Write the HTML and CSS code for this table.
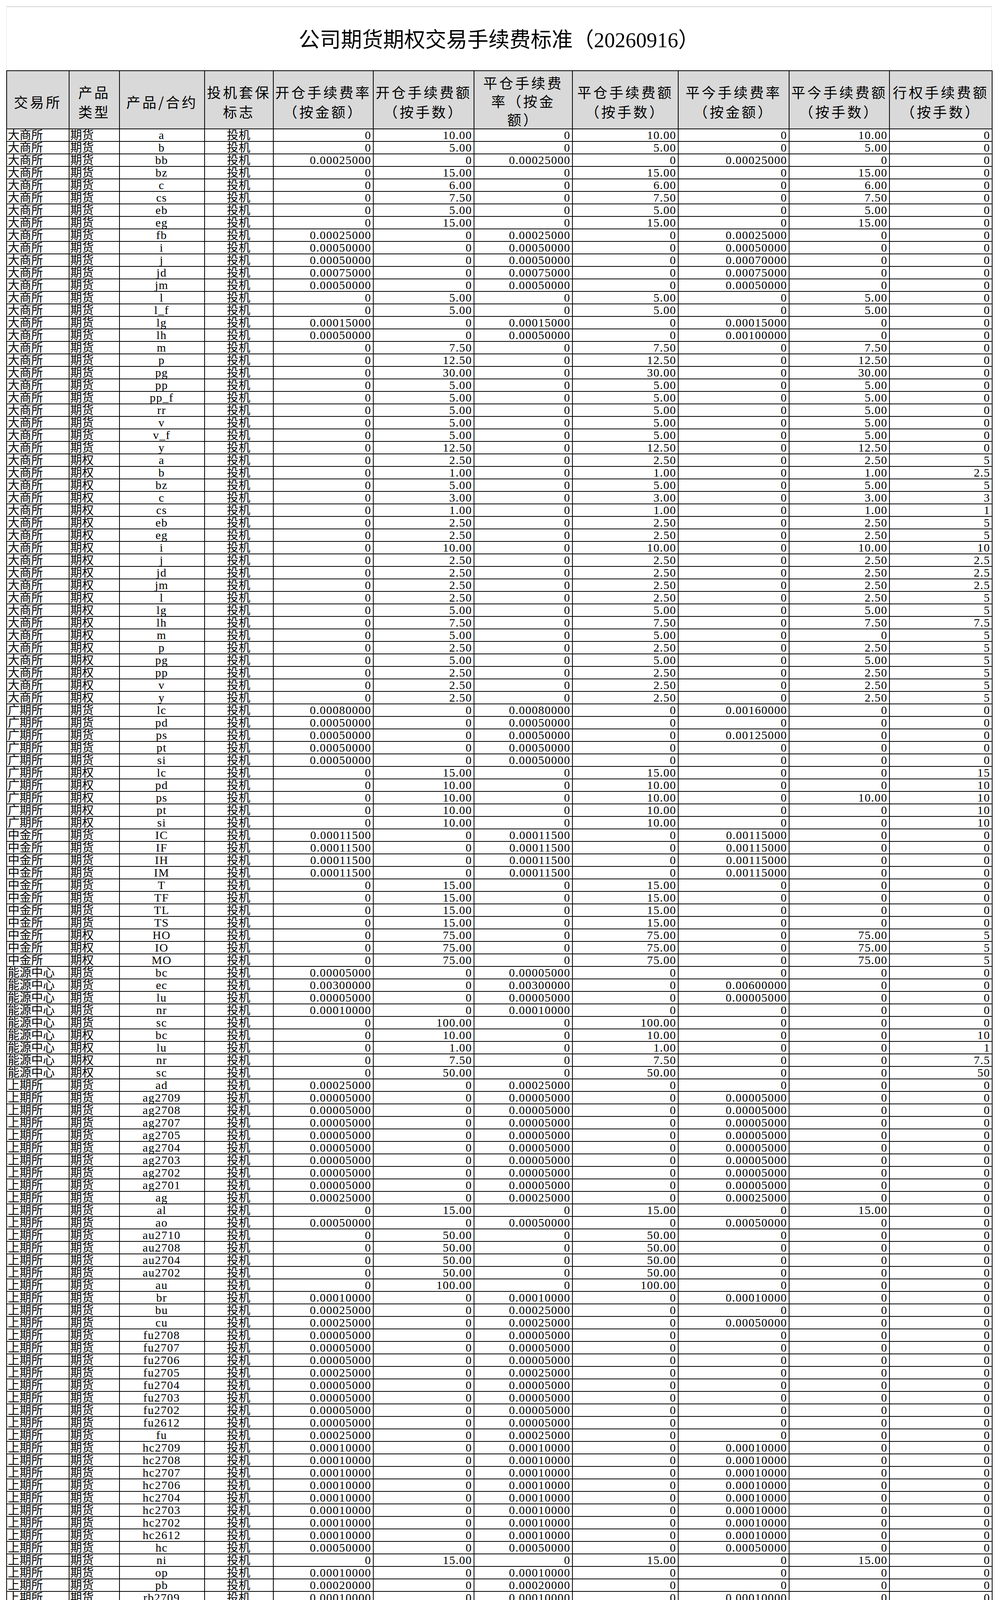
FILE: index.html
```html
<!DOCTYPE html>
<html lang="zh-CN">
<head>
<meta charset="utf-8">
<title>公司期货期权交易手续费标准（20260916）</title>
<link rel="stylesheet" href="styles.css">
</head>
<body>
<div class="sheet">
<div class="title">公司期货期权交易手续费标准（20260916）</div>
<table class="fees">
<colgroup>
<col class="w1"><col class="w2"><col class="w3"><col class="w4"><col class="w5"><col class="w6"><col class="w7"><col class="w8"><col class="w9"><col class="w10"><col class="w11">
</colgroup>
<thead>
<tr>
<th>交易所</th>
<th>产品<br>类型</th>
<th>产品/合约</th>
<th>投机套保<br>标志</th>
<th>开仓手续费率<br>（按金额）</th>
<th>开仓手续费额<br>（按手数）</th>
<th class="tall">平仓手续费<br>率（按金<br>额）</th>
<th>平仓手续费额<br>（按手数）</th>
<th>平今手续费率<br>（按金额）</th>
<th>平今手续费额<br>（按手数）</th>
<th>行权手续费额<br>（按手数）</th>
</tr>
</thead>
<tbody>
<tr><td>大商所</td><td>期货</td><td>a</td><td>投机</td><td>0</td><td>10.00</td><td>0</td><td>10.00</td><td>0</td><td>10.00</td><td>0</td></tr>
<tr><td>大商所</td><td>期货</td><td>b</td><td>投机</td><td>0</td><td>5.00</td><td>0</td><td>5.00</td><td>0</td><td>5.00</td><td>0</td></tr>
<tr><td>大商所</td><td>期货</td><td>bb</td><td>投机</td><td>0.00025000</td><td>0</td><td>0.00025000</td><td>0</td><td>0.00025000</td><td>0</td><td>0</td></tr>
<tr><td>大商所</td><td>期货</td><td>bz</td><td>投机</td><td>0</td><td>15.00</td><td>0</td><td>15.00</td><td>0</td><td>15.00</td><td>0</td></tr>
<tr><td>大商所</td><td>期货</td><td>c</td><td>投机</td><td>0</td><td>6.00</td><td>0</td><td>6.00</td><td>0</td><td>6.00</td><td>0</td></tr>
<tr><td>大商所</td><td>期货</td><td>cs</td><td>投机</td><td>0</td><td>7.50</td><td>0</td><td>7.50</td><td>0</td><td>7.50</td><td>0</td></tr>
<tr><td>大商所</td><td>期货</td><td>eb</td><td>投机</td><td>0</td><td>5.00</td><td>0</td><td>5.00</td><td>0</td><td>5.00</td><td>0</td></tr>
<tr><td>大商所</td><td>期货</td><td>eg</td><td>投机</td><td>0</td><td>15.00</td><td>0</td><td>15.00</td><td>0</td><td>15.00</td><td>0</td></tr>
<tr><td>大商所</td><td>期货</td><td>fb</td><td>投机</td><td>0.00025000</td><td>0</td><td>0.00025000</td><td>0</td><td>0.00025000</td><td>0</td><td>0</td></tr>
<tr><td>大商所</td><td>期货</td><td>i</td><td>投机</td><td>0.00050000</td><td>0</td><td>0.00050000</td><td>0</td><td>0.00050000</td><td>0</td><td>0</td></tr>
<tr><td>大商所</td><td>期货</td><td>j</td><td>投机</td><td>0.00050000</td><td>0</td><td>0.00050000</td><td>0</td><td>0.00070000</td><td>0</td><td>0</td></tr>
<tr><td>大商所</td><td>期货</td><td>jd</td><td>投机</td><td>0.00075000</td><td>0</td><td>0.00075000</td><td>0</td><td>0.00075000</td><td>0</td><td>0</td></tr>
<tr><td>大商所</td><td>期货</td><td>jm</td><td>投机</td><td>0.00050000</td><td>0</td><td>0.00050000</td><td>0</td><td>0.00050000</td><td>0</td><td>0</td></tr>
<tr><td>大商所</td><td>期货</td><td>l</td><td>投机</td><td>0</td><td>5.00</td><td>0</td><td>5.00</td><td>0</td><td>5.00</td><td>0</td></tr>
<tr><td>大商所</td><td>期货</td><td>l_f</td><td>投机</td><td>0</td><td>5.00</td><td>0</td><td>5.00</td><td>0</td><td>5.00</td><td>0</td></tr>
<tr><td>大商所</td><td>期货</td><td>lg</td><td>投机</td><td>0.00015000</td><td>0</td><td>0.00015000</td><td>0</td><td>0.00015000</td><td>0</td><td>0</td></tr>
<tr><td>大商所</td><td>期货</td><td>lh</td><td>投机</td><td>0.00050000</td><td>0</td><td>0.00050000</td><td>0</td><td>0.00100000</td><td>0</td><td>0</td></tr>
<tr><td>大商所</td><td>期货</td><td>m</td><td>投机</td><td>0</td><td>7.50</td><td>0</td><td>7.50</td><td>0</td><td>7.50</td><td>0</td></tr>
<tr><td>大商所</td><td>期货</td><td>p</td><td>投机</td><td>0</td><td>12.50</td><td>0</td><td>12.50</td><td>0</td><td>12.50</td><td>0</td></tr>
<tr><td>大商所</td><td>期货</td><td>pg</td><td>投机</td><td>0</td><td>30.00</td><td>0</td><td>30.00</td><td>0</td><td>30.00</td><td>0</td></tr>
<tr><td>大商所</td><td>期货</td><td>pp</td><td>投机</td><td>0</td><td>5.00</td><td>0</td><td>5.00</td><td>0</td><td>5.00</td><td>0</td></tr>
<tr><td>大商所</td><td>期货</td><td>pp_f</td><td>投机</td><td>0</td><td>5.00</td><td>0</td><td>5.00</td><td>0</td><td>5.00</td><td>0</td></tr>
<tr><td>大商所</td><td>期货</td><td>rr</td><td>投机</td><td>0</td><td>5.00</td><td>0</td><td>5.00</td><td>0</td><td>5.00</td><td>0</td></tr>
<tr><td>大商所</td><td>期货</td><td>v</td><td>投机</td><td>0</td><td>5.00</td><td>0</td><td>5.00</td><td>0</td><td>5.00</td><td>0</td></tr>
<tr><td>大商所</td><td>期货</td><td>v_f</td><td>投机</td><td>0</td><td>5.00</td><td>0</td><td>5.00</td><td>0</td><td>5.00</td><td>0</td></tr>
<tr><td>大商所</td><td>期货</td><td>y</td><td>投机</td><td>0</td><td>12.50</td><td>0</td><td>12.50</td><td>0</td><td>12.50</td><td>0</td></tr>
<tr><td>大商所</td><td>期权</td><td>a</td><td>投机</td><td>0</td><td>2.50</td><td>0</td><td>2.50</td><td>0</td><td>2.50</td><td>5</td></tr>
<tr><td>大商所</td><td>期权</td><td>b</td><td>投机</td><td>0</td><td>1.00</td><td>0</td><td>1.00</td><td>0</td><td>1.00</td><td>2.5</td></tr>
<tr><td>大商所</td><td>期权</td><td>bz</td><td>投机</td><td>0</td><td>5.00</td><td>0</td><td>5.00</td><td>0</td><td>5.00</td><td>5</td></tr>
<tr><td>大商所</td><td>期权</td><td>c</td><td>投机</td><td>0</td><td>3.00</td><td>0</td><td>3.00</td><td>0</td><td>3.00</td><td>3</td></tr>
<tr><td>大商所</td><td>期权</td><td>cs</td><td>投机</td><td>0</td><td>1.00</td><td>0</td><td>1.00</td><td>0</td><td>1.00</td><td>1</td></tr>
<tr><td>大商所</td><td>期权</td><td>eb</td><td>投机</td><td>0</td><td>2.50</td><td>0</td><td>2.50</td><td>0</td><td>2.50</td><td>5</td></tr>
<tr><td>大商所</td><td>期权</td><td>eg</td><td>投机</td><td>0</td><td>2.50</td><td>0</td><td>2.50</td><td>0</td><td>2.50</td><td>5</td></tr>
<tr><td>大商所</td><td>期权</td><td>i</td><td>投机</td><td>0</td><td>10.00</td><td>0</td><td>10.00</td><td>0</td><td>10.00</td><td>10</td></tr>
<tr><td>大商所</td><td>期权</td><td>j</td><td>投机</td><td>0</td><td>2.50</td><td>0</td><td>2.50</td><td>0</td><td>2.50</td><td>2.5</td></tr>
<tr><td>大商所</td><td>期权</td><td>jd</td><td>投机</td><td>0</td><td>2.50</td><td>0</td><td>2.50</td><td>0</td><td>2.50</td><td>2.5</td></tr>
<tr><td>大商所</td><td>期权</td><td>jm</td><td>投机</td><td>0</td><td>2.50</td><td>0</td><td>2.50</td><td>0</td><td>2.50</td><td>2.5</td></tr>
<tr><td>大商所</td><td>期权</td><td>l</td><td>投机</td><td>0</td><td>2.50</td><td>0</td><td>2.50</td><td>0</td><td>2.50</td><td>5</td></tr>
<tr><td>大商所</td><td>期权</td><td>lg</td><td>投机</td><td>0</td><td>5.00</td><td>0</td><td>5.00</td><td>0</td><td>5.00</td><td>5</td></tr>
<tr><td>大商所</td><td>期权</td><td>lh</td><td>投机</td><td>0</td><td>7.50</td><td>0</td><td>7.50</td><td>0</td><td>7.50</td><td>7.5</td></tr>
<tr><td>大商所</td><td>期权</td><td>m</td><td>投机</td><td>0</td><td>5.00</td><td>0</td><td>5.00</td><td>0</td><td>0</td><td>5</td></tr>
<tr><td>大商所</td><td>期权</td><td>p</td><td>投机</td><td>0</td><td>2.50</td><td>0</td><td>2.50</td><td>0</td><td>2.50</td><td>5</td></tr>
<tr><td>大商所</td><td>期权</td><td>pg</td><td>投机</td><td>0</td><td>5.00</td><td>0</td><td>5.00</td><td>0</td><td>5.00</td><td>5</td></tr>
<tr><td>大商所</td><td>期权</td><td>pp</td><td>投机</td><td>0</td><td>2.50</td><td>0</td><td>2.50</td><td>0</td><td>2.50</td><td>5</td></tr>
<tr><td>大商所</td><td>期权</td><td>v</td><td>投机</td><td>0</td><td>2.50</td><td>0</td><td>2.50</td><td>0</td><td>2.50</td><td>5</td></tr>
<tr><td>大商所</td><td>期权</td><td>y</td><td>投机</td><td>0</td><td>2.50</td><td>0</td><td>2.50</td><td>0</td><td>2.50</td><td>5</td></tr>
<tr><td>广期所</td><td>期货</td><td>lc</td><td>投机</td><td>0.00080000</td><td>0</td><td>0.00080000</td><td>0</td><td>0.00160000</td><td>0</td><td>0</td></tr>
<tr><td>广期所</td><td>期货</td><td>pd</td><td>投机</td><td>0.00050000</td><td>0</td><td>0.00050000</td><td>0</td><td>0</td><td>0</td><td>0</td></tr>
<tr><td>广期所</td><td>期货</td><td>ps</td><td>投机</td><td>0.00050000</td><td>0</td><td>0.00050000</td><td>0</td><td>0.00125000</td><td>0</td><td>0</td></tr>
<tr><td>广期所</td><td>期货</td><td>pt</td><td>投机</td><td>0.00050000</td><td>0</td><td>0.00050000</td><td>0</td><td>0</td><td>0</td><td>0</td></tr>
<tr><td>广期所</td><td>期货</td><td>si</td><td>投机</td><td>0.00050000</td><td>0</td><td>0.00050000</td><td>0</td><td>0</td><td>0</td><td>0</td></tr>
<tr><td>广期所</td><td>期权</td><td>lc</td><td>投机</td><td>0</td><td>15.00</td><td>0</td><td>15.00</td><td>0</td><td>0</td><td>15</td></tr>
<tr><td>广期所</td><td>期权</td><td>pd</td><td>投机</td><td>0</td><td>10.00</td><td>0</td><td>10.00</td><td>0</td><td>0</td><td>10</td></tr>
<tr><td>广期所</td><td>期权</td><td>ps</td><td>投机</td><td>0</td><td>10.00</td><td>0</td><td>10.00</td><td>0</td><td>10.00</td><td>10</td></tr>
<tr><td>广期所</td><td>期权</td><td>pt</td><td>投机</td><td>0</td><td>10.00</td><td>0</td><td>10.00</td><td>0</td><td>0</td><td>10</td></tr>
<tr><td>广期所</td><td>期权</td><td>si</td><td>投机</td><td>0</td><td>10.00</td><td>0</td><td>10.00</td><td>0</td><td>0</td><td>10</td></tr>
<tr><td>中金所</td><td>期货</td><td>IC</td><td>投机</td><td>0.00011500</td><td>0</td><td>0.00011500</td><td>0</td><td>0.00115000</td><td>0</td><td>0</td></tr>
<tr><td>中金所</td><td>期货</td><td>IF</td><td>投机</td><td>0.00011500</td><td>0</td><td>0.00011500</td><td>0</td><td>0.00115000</td><td>0</td><td>0</td></tr>
<tr><td>中金所</td><td>期货</td><td>IH</td><td>投机</td><td>0.00011500</td><td>0</td><td>0.00011500</td><td>0</td><td>0.00115000</td><td>0</td><td>0</td></tr>
<tr><td>中金所</td><td>期货</td><td>IM</td><td>投机</td><td>0.00011500</td><td>0</td><td>0.00011500</td><td>0</td><td>0.00115000</td><td>0</td><td>0</td></tr>
<tr><td>中金所</td><td>期货</td><td>T</td><td>投机</td><td>0</td><td>15.00</td><td>0</td><td>15.00</td><td>0</td><td>0</td><td>0</td></tr>
<tr><td>中金所</td><td>期货</td><td>TF</td><td>投机</td><td>0</td><td>15.00</td><td>0</td><td>15.00</td><td>0</td><td>0</td><td>0</td></tr>
<tr><td>中金所</td><td>期货</td><td>TL</td><td>投机</td><td>0</td><td>15.00</td><td>0</td><td>15.00</td><td>0</td><td>0</td><td>0</td></tr>
<tr><td>中金所</td><td>期货</td><td>TS</td><td>投机</td><td>0</td><td>15.00</td><td>0</td><td>15.00</td><td>0</td><td>0</td><td>0</td></tr>
<tr><td>中金所</td><td>期权</td><td>HO</td><td>投机</td><td>0</td><td>75.00</td><td>0</td><td>75.00</td><td>0</td><td>75.00</td><td>5</td></tr>
<tr><td>中金所</td><td>期权</td><td>IO</td><td>投机</td><td>0</td><td>75.00</td><td>0</td><td>75.00</td><td>0</td><td>75.00</td><td>5</td></tr>
<tr><td>中金所</td><td>期权</td><td>MO</td><td>投机</td><td>0</td><td>75.00</td><td>0</td><td>75.00</td><td>0</td><td>75.00</td><td>5</td></tr>
<tr><td>能源中心</td><td>期货</td><td>bc</td><td>投机</td><td>0.00005000</td><td>0</td><td>0.00005000</td><td>0</td><td>0</td><td>0</td><td>0</td></tr>
<tr><td>能源中心</td><td>期货</td><td>ec</td><td>投机</td><td>0.00300000</td><td>0</td><td>0.00300000</td><td>0</td><td>0.00600000</td><td>0</td><td>0</td></tr>
<tr><td>能源中心</td><td>期货</td><td>lu</td><td>投机</td><td>0.00005000</td><td>0</td><td>0.00005000</td><td>0</td><td>0.00005000</td><td>0</td><td>0</td></tr>
<tr><td>能源中心</td><td>期货</td><td>nr</td><td>投机</td><td>0.00010000</td><td>0</td><td>0.00010000</td><td>0</td><td>0</td><td>0</td><td>0</td></tr>
<tr><td>能源中心</td><td>期货</td><td>sc</td><td>投机</td><td>0</td><td>100.00</td><td>0</td><td>100.00</td><td>0</td><td>0</td><td>0</td></tr>
<tr><td>能源中心</td><td>期权</td><td>bc</td><td>投机</td><td>0</td><td>10.00</td><td>0</td><td>10.00</td><td>0</td><td>0</td><td>10</td></tr>
<tr><td>能源中心</td><td>期权</td><td>lu</td><td>投机</td><td>0</td><td>1.00</td><td>0</td><td>1.00</td><td>0</td><td>0</td><td>1</td></tr>
<tr><td>能源中心</td><td>期权</td><td>nr</td><td>投机</td><td>0</td><td>7.50</td><td>0</td><td>7.50</td><td>0</td><td>0</td><td>7.5</td></tr>
<tr><td>能源中心</td><td>期权</td><td>sc</td><td>投机</td><td>0</td><td>50.00</td><td>0</td><td>50.00</td><td>0</td><td>0</td><td>50</td></tr>
<tr><td>上期所</td><td>期货</td><td>ad</td><td>投机</td><td>0.00025000</td><td>0</td><td>0.00025000</td><td>0</td><td>0</td><td>0</td><td>0</td></tr>
<tr><td>上期所</td><td>期货</td><td>ag2709</td><td>投机</td><td>0.00005000</td><td>0</td><td>0.00005000</td><td>0</td><td>0.00005000</td><td>0</td><td>0</td></tr>
<tr><td>上期所</td><td>期货</td><td>ag2708</td><td>投机</td><td>0.00005000</td><td>0</td><td>0.00005000</td><td>0</td><td>0.00005000</td><td>0</td><td>0</td></tr>
<tr><td>上期所</td><td>期货</td><td>ag2707</td><td>投机</td><td>0.00005000</td><td>0</td><td>0.00005000</td><td>0</td><td>0.00005000</td><td>0</td><td>0</td></tr>
<tr><td>上期所</td><td>期货</td><td>ag2705</td><td>投机</td><td>0.00005000</td><td>0</td><td>0.00005000</td><td>0</td><td>0.00005000</td><td>0</td><td>0</td></tr>
<tr><td>上期所</td><td>期货</td><td>ag2704</td><td>投机</td><td>0.00005000</td><td>0</td><td>0.00005000</td><td>0</td><td>0.00005000</td><td>0</td><td>0</td></tr>
<tr><td>上期所</td><td>期货</td><td>ag2703</td><td>投机</td><td>0.00005000</td><td>0</td><td>0.00005000</td><td>0</td><td>0.00005000</td><td>0</td><td>0</td></tr>
<tr><td>上期所</td><td>期货</td><td>ag2702</td><td>投机</td><td>0.00005000</td><td>0</td><td>0.00005000</td><td>0</td><td>0.00005000</td><td>0</td><td>0</td></tr>
<tr><td>上期所</td><td>期货</td><td>ag2701</td><td>投机</td><td>0.00005000</td><td>0</td><td>0.00005000</td><td>0</td><td>0.00005000</td><td>0</td><td>0</td></tr>
<tr><td>上期所</td><td>期货</td><td>ag</td><td>投机</td><td>0.00025000</td><td>0</td><td>0.00025000</td><td>0</td><td>0.00025000</td><td>0</td><td>0</td></tr>
<tr><td>上期所</td><td>期货</td><td>al</td><td>投机</td><td>0</td><td>15.00</td><td>0</td><td>15.00</td><td>0</td><td>15.00</td><td>0</td></tr>
<tr><td>上期所</td><td>期货</td><td>ao</td><td>投机</td><td>0.00050000</td><td>0</td><td>0.00050000</td><td>0</td><td>0.00050000</td><td>0</td><td>0</td></tr>
<tr><td>上期所</td><td>期货</td><td>au2710</td><td>投机</td><td>0</td><td>50.00</td><td>0</td><td>50.00</td><td>0</td><td>0</td><td>0</td></tr>
<tr><td>上期所</td><td>期货</td><td>au2708</td><td>投机</td><td>0</td><td>50.00</td><td>0</td><td>50.00</td><td>0</td><td>0</td><td>0</td></tr>
<tr><td>上期所</td><td>期货</td><td>au2704</td><td>投机</td><td>0</td><td>50.00</td><td>0</td><td>50.00</td><td>0</td><td>0</td><td>0</td></tr>
<tr><td>上期所</td><td>期货</td><td>au2702</td><td>投机</td><td>0</td><td>50.00</td><td>0</td><td>50.00</td><td>0</td><td>0</td><td>0</td></tr>
<tr><td>上期所</td><td>期货</td><td>au</td><td>投机</td><td>0</td><td>100.00</td><td>0</td><td>100.00</td><td>0</td><td>0</td><td>0</td></tr>
<tr><td>上期所</td><td>期货</td><td>br</td><td>投机</td><td>0.00010000</td><td>0</td><td>0.00010000</td><td>0</td><td>0.00010000</td><td>0</td><td>0</td></tr>
<tr><td>上期所</td><td>期货</td><td>bu</td><td>投机</td><td>0.00025000</td><td>0</td><td>0.00025000</td><td>0</td><td>0</td><td>0</td><td>0</td></tr>
<tr><td>上期所</td><td>期货</td><td>cu</td><td>投机</td><td>0.00025000</td><td>0</td><td>0.00025000</td><td>0</td><td>0.00050000</td><td>0</td><td>0</td></tr>
<tr><td>上期所</td><td>期货</td><td>fu2708</td><td>投机</td><td>0.00005000</td><td>0</td><td>0.00005000</td><td>0</td><td>0</td><td>0</td><td>0</td></tr>
<tr><td>上期所</td><td>期货</td><td>fu2707</td><td>投机</td><td>0.00005000</td><td>0</td><td>0.00005000</td><td>0</td><td>0</td><td>0</td><td>0</td></tr>
<tr><td>上期所</td><td>期货</td><td>fu2706</td><td>投机</td><td>0.00005000</td><td>0</td><td>0.00005000</td><td>0</td><td>0</td><td>0</td><td>0</td></tr>
<tr><td>上期所</td><td>期货</td><td>fu2705</td><td>投机</td><td>0.00025000</td><td>0</td><td>0.00025000</td><td>0</td><td>0</td><td>0</td><td>0</td></tr>
<tr><td>上期所</td><td>期货</td><td>fu2704</td><td>投机</td><td>0.00005000</td><td>0</td><td>0.00005000</td><td>0</td><td>0</td><td>0</td><td>0</td></tr>
<tr><td>上期所</td><td>期货</td><td>fu2703</td><td>投机</td><td>0.00005000</td><td>0</td><td>0.00005000</td><td>0</td><td>0</td><td>0</td><td>0</td></tr>
<tr><td>上期所</td><td>期货</td><td>fu2702</td><td>投机</td><td>0.00005000</td><td>0</td><td>0.00005000</td><td>0</td><td>0</td><td>0</td><td>0</td></tr>
<tr><td>上期所</td><td>期货</td><td>fu2612</td><td>投机</td><td>0.00005000</td><td>0</td><td>0.00005000</td><td>0</td><td>0</td><td>0</td><td>0</td></tr>
<tr><td>上期所</td><td>期货</td><td>fu</td><td>投机</td><td>0.00025000</td><td>0</td><td>0.00025000</td><td>0</td><td>0</td><td>0</td><td>0</td></tr>
<tr><td>上期所</td><td>期货</td><td>hc2709</td><td>投机</td><td>0.00010000</td><td>0</td><td>0.00010000</td><td>0</td><td>0.00010000</td><td>0</td><td>0</td></tr>
<tr><td>上期所</td><td>期货</td><td>hc2708</td><td>投机</td><td>0.00010000</td><td>0</td><td>0.00010000</td><td>0</td><td>0.00010000</td><td>0</td><td>0</td></tr>
<tr><td>上期所</td><td>期货</td><td>hc2707</td><td>投机</td><td>0.00010000</td><td>0</td><td>0.00010000</td><td>0</td><td>0.00010000</td><td>0</td><td>0</td></tr>
<tr><td>上期所</td><td>期货</td><td>hc2706</td><td>投机</td><td>0.00010000</td><td>0</td><td>0.00010000</td><td>0</td><td>0.00010000</td><td>0</td><td>0</td></tr>
<tr><td>上期所</td><td>期货</td><td>hc2704</td><td>投机</td><td>0.00010000</td><td>0</td><td>0.00010000</td><td>0</td><td>0.00010000</td><td>0</td><td>0</td></tr>
<tr><td>上期所</td><td>期货</td><td>hc2703</td><td>投机</td><td>0.00010000</td><td>0</td><td>0.00010000</td><td>0</td><td>0.00010000</td><td>0</td><td>0</td></tr>
<tr><td>上期所</td><td>期货</td><td>hc2702</td><td>投机</td><td>0.00010000</td><td>0</td><td>0.00010000</td><td>0</td><td>0.00010000</td><td>0</td><td>0</td></tr>
<tr><td>上期所</td><td>期货</td><td>hc2612</td><td>投机</td><td>0.00010000</td><td>0</td><td>0.00010000</td><td>0</td><td>0.00010000</td><td>0</td><td>0</td></tr>
<tr><td>上期所</td><td>期货</td><td>hc</td><td>投机</td><td>0.00050000</td><td>0</td><td>0.00050000</td><td>0</td><td>0.00050000</td><td>0</td><td>0</td></tr>
<tr><td>上期所</td><td>期货</td><td>ni</td><td>投机</td><td>0</td><td>15.00</td><td>0</td><td>15.00</td><td>0</td><td>15.00</td><td>0</td></tr>
<tr><td>上期所</td><td>期货</td><td>op</td><td>投机</td><td>0.00010000</td><td>0</td><td>0.00010000</td><td>0</td><td>0</td><td>0</td><td>0</td></tr>
<tr><td>上期所</td><td>期货</td><td>pb</td><td>投机</td><td>0.00020000</td><td>0</td><td>0.00020000</td><td>0</td><td>0</td><td>0</td><td>0</td></tr>
<tr><td>上期所</td><td>期货</td><td>rb2709</td><td>投机</td><td>0.00010000</td><td>0</td><td>0.00010000</td><td>0</td><td>0.00010000</td><td>0</td><td>0</td></tr>
<tr><td>上期所</td><td>期货</td><td>rb2708</td><td>投机</td><td>0.00010000</td><td>0</td><td>0.00010000</td><td>0</td><td>0.00010000</td><td>0</td><td>0</td></tr>
<tr><td>上期所</td><td>期货</td><td>rb2707</td><td>投机</td><td>0.00010000</td><td>0</td><td>0.00010000</td><td>0</td><td>0.00010000</td><td>0</td><td>0</td></tr>
<tr><td>上期所</td><td>期货</td><td>rb2706</td><td>投机</td><td>0.00010000</td><td>0</td><td>0.00010000</td><td>0</td><td>0.00010000</td><td>0</td><td>0</td></tr>
<tr><td>上期所</td><td>期货</td><td>rb2704</td><td>投机</td><td>0.00010000</td><td>0</td><td>0.00010000</td><td>0</td><td>0.00010000</td><td>0</td><td>0</td></tr>
<tr><td>上期所</td><td>期货</td><td>rb2703</td><td>投机</td><td>0.00010000</td><td>0</td><td>0.00010000</td><td>0</td><td>0.00010000</td><td>0</td><td>0</td></tr>
<tr><td>上期所</td><td>期货</td><td>rb2702</td><td>投机</td><td>0.00010000</td><td>0</td><td>0.00010000</td><td>0</td><td>0.00010000</td><td>0</td><td>0</td></tr>
<tr><td>上期所</td><td>期货</td><td>rb2612</td><td>投机</td><td>0.00010000</td><td>0</td><td>0.00010000</td><td>0</td><td>0.00010000</td><td>0</td><td>0</td></tr>
<tr><td>上期所</td><td>期货</td><td>rb</td><td>投机</td><td>0.00050000</td><td>0</td><td>0.00050000</td><td>0</td><td>0.00050000</td><td>0</td><td>0</td></tr>
<tr><td>上期所</td><td>期货</td><td>ru</td><td>投机</td><td>0</td><td>15.00</td><td>0</td><td>15.00</td><td>0</td><td>0</td><td>0</td></tr>
<tr><td>上期所</td><td>期货</td><td>sn</td><td>投机</td><td>0</td><td>15.00</td><td>0</td><td>15.00</td><td>0</td><td>15.00</td><td>0</td></tr>
<tr><td>上期所</td><td>期货</td><td>sp</td><td>投机</td><td>0.00010000</td><td>0</td><td>0.00010000</td><td>0</td><td>0</td><td>0</td><td>0</td></tr>
<tr><td>上期所</td><td>期货</td><td>ss</td><td>投机</td><td>0</td><td>10.00</td><td>0</td><td>10.00</td><td>0</td><td>0</td><td>0</td></tr>
<tr><td>上期所</td><td>期货</td><td>wr</td><td>投机</td><td>0.00020000</td><td>0</td><td>0.00020000</td><td>0</td><td>0</td><td>0</td><td>0</td></tr>
<tr><td>上期所</td><td>期货</td><td>zn</td><td>投机</td><td>0</td><td>15.00</td><td>0</td><td>15.00</td><td>0</td><td>0</td><td>0</td></tr>
<tr><td>上期所</td><td>期权</td><td>ad</td><td>投机</td><td>0</td><td>25.00</td><td>0</td><td>25.00</td><td>0</td><td>0</td><td>25</td></tr>
<tr><td>上期所</td><td>期权</td><td>ag</td><td>投机</td><td>0</td><td>10.00</td><td>0</td><td>10.00</td><td>0</td><td>0</td><td>10</td></tr>
<tr><td>上期所</td><td>期权</td><td>al</td><td>投机</td><td>0</td><td>7.50</td><td>0</td><td>7.50</td><td>0</td><td>0</td><td>7.5</td></tr>
<tr><td>上期所</td><td>期权</td><td>ao</td><td>投机</td><td>0</td><td>17.50</td><td>0</td><td>17.50</td><td>0</td><td>0</td><td>17.5</td></tr>
<tr><td>上期所</td><td>期权</td><td>au</td><td>投机</td><td>0</td><td>10.00</td><td>0</td><td>10.00</td><td>0</td><td>0</td><td>10</td></tr>
<tr><td>上期所</td><td>期权</td><td>br</td><td>投机</td><td>0</td><td>2.50</td><td>0</td><td>2.50</td><td>0</td><td>0</td><td>2.5</td></tr>
<tr><td>上期所</td><td>期权</td><td>bu</td><td>投机</td><td>0</td><td>5.00</td><td>0</td><td>5.00</td><td>0</td><td>0</td><td>5</td></tr>
<tr><td>上期所</td><td>期权</td><td>cu</td><td>投机</td><td>0</td><td>25.00</td><td>0</td><td>25.00</td><td>0</td><td>0</td><td>25</td></tr>
<tr><td>上期所</td><td>期权</td><td>fu</td><td>投机</td><td>0</td><td>5.00</td><td>0</td><td>5.00</td><td>0</td><td>0</td><td>5</td></tr>
<tr><td>上期所</td><td>期权</td><td>hc</td><td>投机</td><td>0</td><td>10.00</td><td>0</td><td>10.00</td><td>0</td><td>0</td><td>10</td></tr>
<tr><td>上期所</td><td>期权</td><td>ni</td><td>投机</td><td>0</td><td>7.50</td><td>0</td><td>7.50</td><td>0</td><td>0</td><td>7.5</td></tr>
<tr><td>上期所</td><td>期权</td><td>op</td><td>投机</td><td>0</td><td>25.00</td><td>0</td><td>25.00</td><td>0</td><td>0</td><td>25</td></tr>
<tr><td>上期所</td><td>期权</td><td>pb</td><td>投机</td><td>0</td><td>7.50</td><td>0</td><td>7.50</td><td>0</td><td>0</td><td>7.5</td></tr>
<tr><td>上期所</td><td>期权</td><td>rb</td><td>投机</td><td>0</td><td>7.50</td><td>0</td><td>7.50</td><td>0</td><td>0</td><td>7.5</td></tr>
<tr><td>上期所</td><td>期权</td><td>ru</td><td>投机</td><td>0</td><td>7.50</td><td>0</td><td>7.50</td><td>0</td><td>0</td><td>7.5</td></tr>
<tr><td>上期所</td><td>期权</td><td>sn</td><td>投机</td><td>0</td><td>7.50</td><td>0</td><td>7.50</td><td>0</td><td>0</td><td>7.5</td></tr>
<tr><td>上期所</td><td>期权</td><td>sp</td><td>投机</td><td>0</td><td>7.50</td><td>0</td><td>7.50</td><td>0</td><td>0</td><td>7.5</td></tr>
<tr><td>上期所</td><td>期权</td><td>ss</td><td>投机</td><td>0</td><td>5.00</td><td>0</td><td>5.00</td><td>0</td><td>0</td><td>5</td></tr>
<tr><td>上期所</td><td>期权</td><td>zn</td><td>投机</td><td>0</td><td>7.50</td><td>0</td><td>7.50</td><td>0</td><td>0</td><td>7.5</td></tr>
<tr><td>郑商所</td><td>期货</td><td>AP</td><td>投机</td><td>0</td><td>25.00</td><td>0</td><td>25.00</td><td>0</td><td>50.00</td><td>0</td></tr>
<tr><td>郑商所</td><td>期货</td><td>CF</td><td>投机</td><td>0</td><td>21.50</td><td>0</td><td>21.50</td><td>0</td><td>0</td><td>0</td></tr>
<tr><td>郑商所</td><td>期货</td><td>CJ</td><td>投机</td><td>0</td><td>15.00</td><td>0</td><td>15.00</td><td>0</td><td>15.00</td><td>0</td></tr>
<tr><td>郑商所</td><td>期货</td><td>CY</td><td>投机</td><td>0</td><td>5.00</td><td>0</td><td>5.00</td><td>0</td><td>0</td><td>0</td></tr>
<tr><td>郑商所</td><td>期货</td><td>FG</td><td>投机</td><td>0</td><td>10.00</td><td>0</td><td>10.00</td><td>0</td><td>10.00</td><td>0</td></tr>
<tr><td>郑商所</td><td>期货</td><td>JR</td><td>投机</td><td>0</td><td>15.00</td><td>0</td><td>15.00</td><td>0</td><td>15.00</td><td>0</td></tr>
<tr><td>郑商所</td><td>期货</td><td>LR</td><td>投机</td><td>0</td><td>15.00</td><td>0</td><td>15.00</td><td>0</td><td>15.00</td><td>0</td></tr>
<tr><td>郑商所</td><td>期货</td><td>MA</td><td>投机</td><td>0.00050000</td><td>0</td><td>0.00050000</td><td>0</td><td>0.00050000</td><td>0</td><td>0</td></tr>
<tr><td>郑商所</td><td>期货</td><td>OI</td><td>投机</td><td>0</td><td>10.00</td><td>0</td><td>10.00</td><td>0</td><td>10.00</td><td>0</td></tr>
<tr><td>郑商所</td><td>期货</td><td>PF</td><td>投机</td><td>0</td><td>10.00</td><td>0</td><td>10.00</td><td>0</td><td>0</td><td>0</td></tr>
<tr><td>郑商所</td><td>期货</td><td>PK</td><td>投机</td><td>0</td><td>10.00</td><td>0</td><td>10.00</td><td>0</td><td>10.00</td><td>0</td></tr>
<tr><td>郑商所</td><td>期货</td><td>PL</td><td>投机</td><td>0</td><td>15.00</td><td>0</td><td>15.00</td><td>0</td><td>0</td><td>0</td></tr>
<tr><td>郑商所</td><td>期货</td><td>PM</td><td>投机</td><td>0</td><td>150.00</td><td>0</td><td>150.00</td><td>0</td><td>150.00</td><td>0</td></tr>
<tr><td>郑商所</td><td>期货</td><td>PR</td><td>投机</td><td>0.00025000</td><td>0</td><td>0.00025000</td><td>0</td><td>0</td><td>0</td><td>0</td></tr>
<tr><td>郑商所</td><td>期货</td><td>PX</td><td>投机</td><td>0.00050000</td><td>0</td><td>0.00050000</td><td>0</td><td>0</td><td>0</td><td>0</td></tr>
<tr><td>郑商所</td><td>期货</td><td>RI</td><td>投机</td><td>0</td><td>12.50</td><td>0</td><td>12.50</td><td>0</td><td>12.50</td><td>0</td></tr>
<tr><td>郑商所</td><td>期货</td><td>RM</td><td>投机</td><td>0</td><td>7.50</td><td>0</td><td>7.50</td><td>0</td><td>0</td><td>0</td></tr>
<tr><td>郑商所</td><td>期货</td><td>RS</td><td>投机</td><td>0</td><td>10.00</td><td>0</td><td>10.00</td><td>0</td><td>0</td><td>0</td></tr>
<tr><td>郑商所</td><td>期货</td><td>SA</td><td>投机</td><td>0.00050000</td><td>0</td><td>0.00050000</td><td>0</td><td>0.00050000</td><td>0</td><td>0</td></tr>
<tr><td>郑商所</td><td>期货</td><td>SF</td><td>投机</td><td>0</td><td>10.00</td><td>0</td><td>10.00</td><td>0</td><td>0</td><td>0</td></tr>
<tr><td>郑商所</td><td>期货</td><td>SH</td><td>投机</td><td>0.00050000</td><td>0</td><td>0.00050000</td><td>0</td><td>0</td><td>0</td><td>0</td></tr>
<tr><td>郑商所</td><td>期货</td><td>SM</td><td>投机</td><td>0</td><td>10.00</td><td>0</td><td>10.00</td><td>0</td><td>0</td><td>0</td></tr>
<tr><td>郑商所</td><td>期货</td><td>SR</td><td>投机</td><td>0</td><td>10.00</td><td>0</td><td>10.00</td><td>0</td><td>0</td><td>0</td></tr>
<tr><td>郑商所</td><td>期货</td><td>TA</td><td>投机</td><td>0</td><td>15.00</td><td>0</td><td>15.00</td><td>0</td><td>0</td><td>0</td></tr>
<tr><td>郑商所</td><td>期货</td><td>UR</td><td>投机</td><td>0.00050000</td><td>0</td><td>0.00050000</td><td>0</td><td>0.00050000</td><td>0</td><td>0</td></tr>
<tr><td>郑商所</td><td>期货</td><td>WH</td><td>投机</td><td>0</td><td>150.00</td><td>0</td><td>150.00</td><td>0</td><td>150.00</td><td>0</td></tr>
<tr><td>郑商所</td><td>期货</td><td>ZC</td><td>投机</td><td>0</td><td>750.00</td><td>0</td><td>750.00</td><td>0</td><td>750.00</td><td>0</td></tr>
<tr><td>郑商所</td><td>期权</td><td>AP</td><td>投机</td><td>0</td><td>5.00</td><td>0</td><td>5.00</td><td>0</td><td>0</td><td>5</td></tr>
<tr><td>郑商所</td><td>期权</td><td>CF</td><td>投机</td><td>0</td><td>7.50</td><td>0</td><td>7.50</td><td>0</td><td>0</td><td>7.5</td></tr>
<tr><td>郑商所</td><td>期权</td><td>CJ</td><td>投机</td><td>0</td><td>5.00</td><td>0</td><td>5.00</td><td>0</td><td>0</td><td>5</td></tr>
<tr><td>郑商所</td><td>期权</td><td>FG</td><td>投机</td><td>0</td><td>2.50</td><td>0</td><td>2.50</td><td>0</td><td>0</td><td>2.5</td></tr>
<tr><td>郑商所</td><td>期权</td><td>MA</td><td>投机</td><td>0</td><td>2.50</td><td>0</td><td>2.50</td><td>0</td><td>0</td><td>2.5</td></tr>
<tr><td>郑商所</td><td>期权</td><td>OI</td><td>投机</td><td>0</td><td>7.50</td><td>0</td><td>7.50</td><td>0</td><td>0</td><td>7.5</td></tr>
<tr><td>郑商所</td><td>期权</td><td>PF</td><td>投机</td><td>0</td><td>2.50</td><td>0</td><td>2.50</td><td>0</td><td>0</td><td>2.5</td></tr>
<tr><td>郑商所</td><td>期权</td><td>PK</td><td>投机</td><td>0</td><td>4.00</td><td>0</td><td>4.00</td><td>0</td><td>0</td><td>4</td></tr>
<tr><td>郑商所</td><td>期权</td><td>PL</td><td>投机</td><td>0</td><td>5.00</td><td>0</td><td>5.00</td><td>0</td><td>0</td><td>5</td></tr>
<tr><td>郑商所</td><td>期权</td><td>PR</td><td>投机</td><td>0</td><td>5.00</td><td>0</td><td>5.00</td><td>0</td><td>0</td><td>5</td></tr>
<tr><td>郑商所</td><td>期权</td><td>PX</td><td>投机</td><td>0</td><td>5.00</td><td>0</td><td>5.00</td><td>0</td><td>0</td><td>5</td></tr>
<tr><td>郑商所</td><td>期权</td><td>RM</td><td>投机</td><td>0</td><td>4.00</td><td>0</td><td>4.00</td><td>0</td><td>0</td><td>4</td></tr>
<tr><td>郑商所</td><td>期权</td><td>SA</td><td>投机</td><td>0</td><td>2.50</td><td>0</td><td>2.50</td><td>0</td><td>0</td><td>2.5</td></tr>
<tr><td>郑商所</td><td>期权</td><td>SF</td><td>投机</td><td>0</td><td>2.50</td><td>0</td><td>2.50</td><td>0</td><td>0</td><td>2.5</td></tr>
<tr><td>郑商所</td><td>期权</td><td>SH</td><td>投机</td><td>0</td><td>10.00</td><td>0</td><td>10.00</td><td>0</td><td>0</td><td>10</td></tr>
<tr><td>郑商所</td><td>期权</td><td>SM</td><td>投机</td><td>0</td><td>2.50</td><td>0</td><td>2.50</td><td>0</td><td>0</td><td>2.5</td></tr>
<tr><td>郑商所</td><td>期权</td><td>SR</td><td>投机</td><td>0</td><td>7.50</td><td>0</td><td>7.50</td><td>0</td><td>0</td><td>7.5</td></tr>
<tr><td>郑商所</td><td>期权</td><td>TA</td><td>投机</td><td>0</td><td>2.50</td><td>0</td><td>2.50</td><td>0</td><td>0</td><td>2.5</td></tr>
<tr><td>郑商所</td><td>期权</td><td>UR</td><td>投机</td><td>0</td><td>5.00</td><td>0</td><td>5.00</td><td>0</td><td>0</td><td>5</td></tr>
<tr><td>郑商所</td><td>期权</td><td>ZC</td><td>投机</td><td>0</td><td>750.00</td><td>0</td><td>750.00</td><td>0</td><td>750.00</td><td>750</td></tr>
</tbody>
<tbody class="blank">
<tr><td></td><td></td><td></td><td></td><td></td><td></td><td></td><td></td><td></td><td></td><td></td></tr>
<tr><td></td><td></td><td></td><td></td><td></td><td></td><td></td><td></td><td></td><td></td><td></td></tr>
</tbody>
</table>
</div>
</body>
</html>
```

FILE: styles.css
```css
* {
  box-sizing: border-box;
}

html,
body {
  margin: 0;
  padding: 0;
  background: #ffffff;
}

body {
  font-family: "Liberation Serif", "Noto Sans CJK SC", serif;
  color: #000000;
}

.sheet {
  padding: 16px 0 0 16px;
}

.title {
  width: 2524px;
  height: 164px;
  padding-top: 8px;
  border-top: 2px solid #d4d4d4;
  border-left: 1px solid #e2e2e2;
  border-right: 1px solid #e2e2e2;
  display: flex;
  align-items: center;
  justify-content: center;
  font-size: 54px;
  line-height: 1;
}

.fees {
  border-collapse: collapse;
  table-layout: fixed;
  width: 2524px;
}

.w1 { width: 160px; }
.w2 { width: 129px; }
.w3 { width: 218px; }
.w4 { width: 176px; }
.w5 { width: 256px; }
.w6 { width: 258px; }
.w7 { width: 252px; }
.w8 { width: 271px; }
.w9 { width: 284px; }
.w10 { width: 257px; }
.w11 { width: 263px; }

.fees th,
.fees td {
  border: 2px solid #000000;
  white-space: nowrap;
  overflow: hidden;
}

.fees thead tr {
  height: 149px;
}

.fees th {
  padding: 8px 0 0;
  background: #d9d9d9;
  font-family: "Noto Sans CJK SC", sans-serif;
  font-weight: normal;
  font-size: 36px;
  letter-spacing: 5px;
  line-height: 50px;
  text-align: center;
  vertical-align: middle;
}

.fees th.tall {
  padding-top: 6px;
  line-height: 47px;
}

.fees tbody tr {
  height: 32px;
}

.fees td {
  padding: 0 4px 0 2px;
  font-size: 30px;
  line-height: 30px;
  text-align: right;
  vertical-align: middle;
}

.fees td:nth-child(3),
.fees td:nth-child(n+5) {
  letter-spacing: 1.5px;
}

.fees td:nth-child(1),
.fees td:nth-child(2) {
  text-align: left;
}

.fees td:nth-child(3),
.fees td:nth-child(4) {
  text-align: center;
}

.fees .blank tr {
  height: 36px;
}

.fees .blank td {
  border: 1px solid #dcdcdc;
}
```
